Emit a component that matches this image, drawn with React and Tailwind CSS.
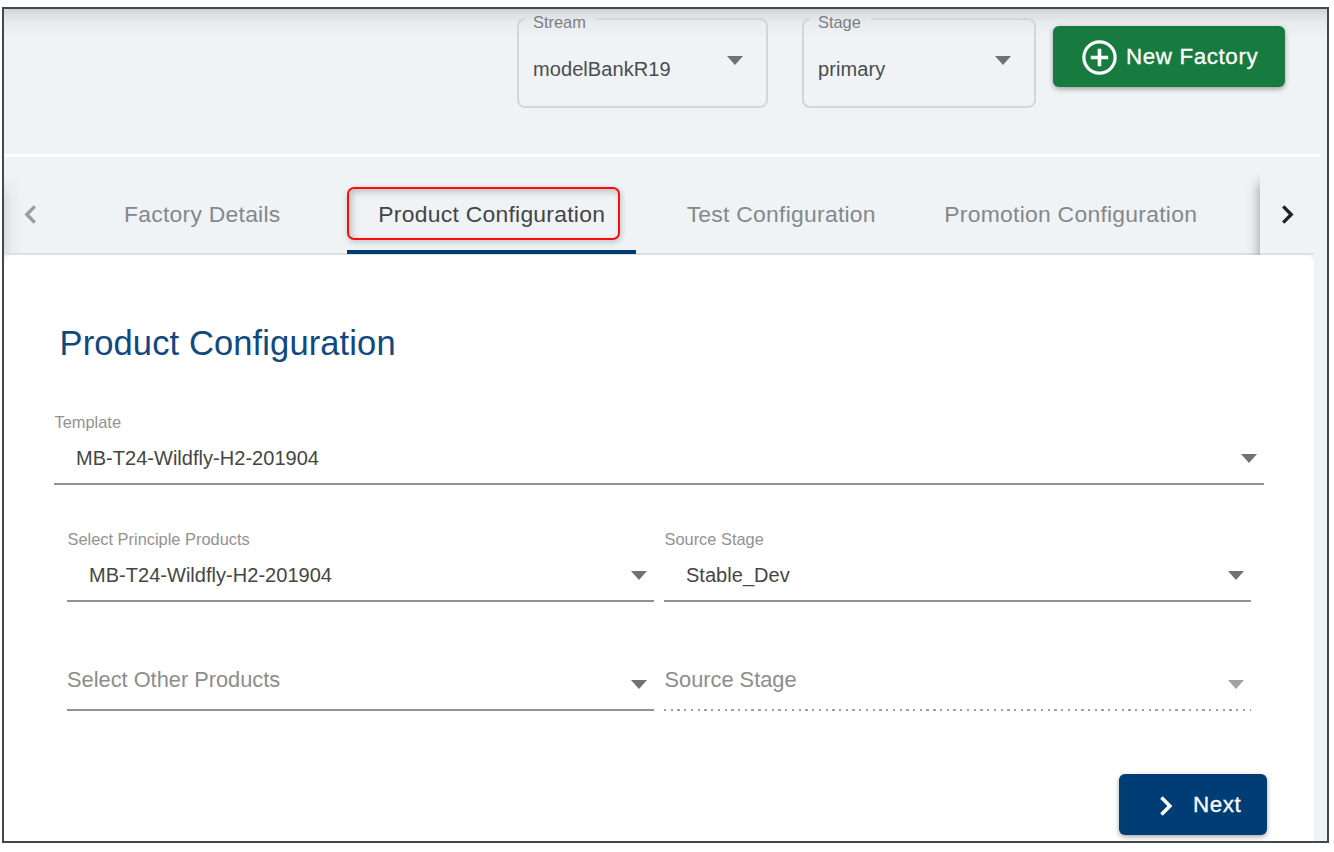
const tabs = [
  { label: 'Factory Details' },
  { label: 'Product Configuration', active: true },
  { label: 'Test Configuration' },
  { label: 'Promotion Configuration' },
];

function Caret({ className = '' }) {
  return (
    <svg className={`h-[9px] w-4 shrink-0 ${className}`} viewBox="0 0 16 9" fill="currentColor">
      <path d="M0 0h16L8 9z" />
    </svg>
  );
}

function Chevron({ left = false, className = '' }) {
  return (
    <svg className={className} viewBox="0 0 12 19" fill="none" stroke="currentColor" strokeWidth="3.4">
      <path d={left ? 'M10.8 1.4 2.8 9.5l8 8.1' : 'M1.2 1.4l8 8.1-8 8.1'} />
    </svg>
  );
}

function OutlinedSelect({ label, value, className }) {
  return (
    <fieldset className={`h-[98px] shrink-0 rounded-lg border-2 border-[#d3d6d9] pl-[6px] ${className}`}>
      <legend className="h-[18px] pl-2 pr-[10px] text-[16.4px] leading-[18px] text-[#7c7f82]">
        <span className="relative top-[3px] block">{label}</span>
      </legend>
      <div className="flex pl-2 pr-[23px] pt-[29px]">
        <span className="flex-1 text-[20px] leading-6 tracking-[0.08px] text-[#4a4c4e]">{value}</span>
        <Caret className="-mt-px text-[#6f7173]" />
      </div>
    </fieldset>
  );
}

function FilledSelect({ label, value, className }) {
  return (
    <div className={`flex flex-col border-b-2 border-[#929292] ${className}`}>
      <div className="h-5 pl-[0.5px] text-[16.4px] leading-5 text-[#929292]">{label}</div>
      <div className="mt-[14px] flex pl-[22px] pr-[7px]">
        <span className="flex-1 text-[20px] leading-6 tracking-[0.03px] text-[#454545]">{value}</span>
        <Caret className="mt-2 text-[#727272]" />
      </div>
    </div>
  );
}

export default function App() {
  return (
    <div className="h-[852px] w-[1334px] overflow-hidden bg-white pl-[2px] pt-[7px] font-['Liberation_Sans',Arial,sans-serif]">
      <div className="flex h-[836px] w-[1327px] flex-col overflow-hidden border-2 border-[#444648] bg-[#eff3f6]">
        <header className="flex h-[145px] shrink-0 items-start bg-[linear-gradient(to_bottom,#cfd3d6_0px,#dde1e4_6px,#e8ecef_14px,#eff3f6_28px)] pl-[513px]">
          <OutlinedSelect label="Stream" value="modelBankR19" className="mt-px w-[251px]" />
          <OutlinedSelect label="Stage" value="primary" className="ml-[34px] mt-px w-[234px]" />
          <button className="ml-[17px] mt-[17px] flex h-[61px] w-[232px] shrink-0 items-center rounded-md bg-[#177b3f] pl-[29px] text-white shadow-[0_2px_5px_rgba(0,0,0,0.35)]">
            <svg className="mt-[2px] h-[35px] w-[35px]" viewBox="0 0 35 35" fill="none" stroke="currentColor">
              <circle cx="17.5" cy="17.5" r="15.6" strokeWidth="3.2" />
              <path d="M17.5 8.8v17.4M8.8 17.5h17.4" strokeWidth="3.6" />
            </svg>
            <span className="ml-[9px] text-[22.4px] leading-7 tracking-[0.6px] [-webkit-text-stroke:0.3px_white]">New Factory</span>
          </button>
        </header>
        <div className="h-[3px] w-[1316px] shrink-0 bg-white" />

        <nav className="mt-[18px] flex h-20 w-[1310px] shrink-0 overflow-hidden shadow-[inset_0_-2px_0_#dce0e3]">
          <div className="flex h-[78px] w-[53px] shrink-0 bg-[linear-gradient(to_bottom,#eff3f6_0px,#eff3f600_24px),linear-gradient(to_right,#d9dde0_0px,#e8ecef_8px,#eff3f6_18px)] pl-5 pt-[30px]">
            <Chevron left className="h-[19px] w-3 text-[#999c9e]" />
          </div>
          <div className="flex w-[1203px] shrink-0">
            {tabs.map((tab) => (
              <div
                key={tab.label}
                className={`relative flex h-[79px] w-[289.5px] shrink-0 justify-center pl-px pt-[25px] text-[22.9px] leading-7 tracking-[0.26px] ${
                  tab.active ? 'border-b-4 border-[#003d75] text-[#434547]' : 'text-[#85888a]'
                }`}
              >
                {tab.label}
                {tab.active && (
                  <div className="absolute left-0 top-3 h-[53px] w-[273.5px] rounded-[7px] border-2 border-[#fb0d0d] shadow-[1px_2px_6px_rgba(0,0,0,0.2),inset_3px_3px_7px_rgba(0,0,0,0.2)]" />
                )}
              </div>
            ))}
          </div>
          <div className="flex h-20 flex-1 border-b-2 border-[#dce0e3] bg-[#eff3f6] pl-[22px] pt-[30px] shadow-[0_8px_12px_rgba(0,0,0,0.4)]">
            <Chevron className="h-[19px] w-3 text-[#202224]" />
          </div>
        </nav>

        <main className="flex w-[1310px] flex-1 flex-col rounded-t-[8px] bg-white">
          <h1 className="ml-[55.5px] mt-[66px] h-11 text-[34.5px] leading-[44px] tracking-[0.12px] text-[#10497f]">
            Product Configuration
          </h1>
          <div className="pl-[50px]">
            <FilledSelect label="Template" value="MB-T24-Wildfly-H2-201904" className="mt-[47px] h-[73px] w-[1210px]" />
          </div>
          <div className="mt-11 flex gap-[10px] pl-[63px]">
            <FilledSelect label="Select Principle Products" value="MB-T24-Wildfly-H2-201904" className="h-[73px] w-[587px]" />
            <FilledSelect label="Source Stage" value="Stable_Dev" className="h-[73px] w-[587px]" />
          </div>
          <div className="mt-[64px] flex gap-[10px] pl-[63px] text-[21.8px] leading-7 text-[#8d8d8d]">
            <div className="flex h-[45px] w-[587px] border-b-2 border-[#929292] pr-[7px]">
              <span className="flex-1">Select Other Products</span>
              <Caret className="mt-[14px] text-[#727272]" />
            </div>
            <div className="flex h-[45px] w-[587px] flex-col">
              <div className="flex h-[43px] pr-[7px]">
                <span className="flex-1 pl-[0.5px]">Source Stage</span>
                <Caret className="mt-[14px] text-[#a2a2a2]" />
              </div>
              <div className="h-[2px] bg-[repeating-linear-gradient(to_right,#a0a0a0_0px,#a0a0a0_2.3px,transparent_2.3px,transparent_6.73px)]" />
            </div>
          </div>
          <button className="ml-[1115px] mt-[63px] flex h-[61px] w-[148px] shrink-0 rounded-md bg-[#003d75] pl-[41px] text-white shadow-[0_2px_5px_rgba(0,0,0,0.35)]">
            <Chevron className="mt-[22px] h-5 w-[13px]" />
            <span className="ml-5 mt-[17px] text-[22.4px] leading-7 tracking-[0.6px] [-webkit-text-stroke:0.3px_white]">Next</span>
          </button>
        </main>
      </div>
    </div>
  );
}
